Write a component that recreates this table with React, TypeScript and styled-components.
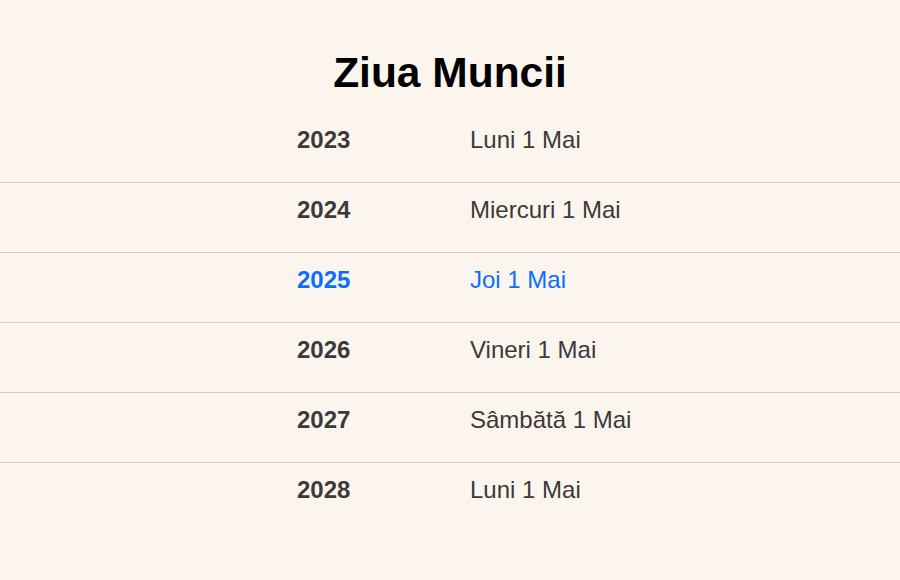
import React from 'react';
import styled, { createGlobalStyle } from 'styled-components';

const GlobalStyle = createGlobalStyle`
  html, body {
    margin: 0;
    padding: 0;
    background: #fcf5ee;
  }
  body {
    font-family: 'Liberation Sans', Arial, sans-serif;
  }
`;

const Page = styled.div`
  width: 900px;
  height: 580px;
  background: #fcf5ee;
  padding-top: 49px;
  box-sizing: border-box;
`;

const Title = styled.h1`
  margin: 0 0 16px;
  font-size: 42.5px;
  line-height: 48px;
  font-weight: 700;
  color: #000;
  text-align: center;
`;

const List = styled.div`
  display: flex;
  flex-direction: column;
`;

const Row = styled.div<{ $current?: boolean; $last?: boolean }>`
  display: grid;
  grid-template-columns: 173px 133px;
  justify-content: center;
  height: 70px;
  box-sizing: border-box;
  padding-top: 13px;
  border-bottom: ${(p) => (p.$last ? 'none' : '1px solid #d9ccbf')};
  font-size: 24px;
  line-height: 28px;
  color: ${(p) => (p.$current ? '#0d6efd' : '#3a3a3a')};
`;

const Year = styled.span`
  font-weight: 700;
`;

const Day = styled.span`
  white-space: nowrap;
`;

const rows = [
  { year: 2023, day: 'Luni 1 Mai' },
  { year: 2024, day: 'Miercuri 1 Mai' },
  { year: 2025, day: 'Joi 1 Mai' },
  { year: 2026, day: 'Vineri 1 Mai' },
  { year: 2027, day: 'Sâmbătă 1 Mai' },
  { year: 2028, day: 'Luni 1 Mai' }
];

export default function App() {
  return (
    <>
      <GlobalStyle />
      <Page>
        <Title>Ziua Muncii</Title>
        <List>
          {rows.map((r, i) => (
            <Row key={r.year} $current={r.year === 2025} $last={i === rows.length - 1}>
              <Year>{r.year}</Year>
              <Day>{r.day}</Day>
            </Row>
          ))}
        </List>
      </Page>
    </>
  );
}
